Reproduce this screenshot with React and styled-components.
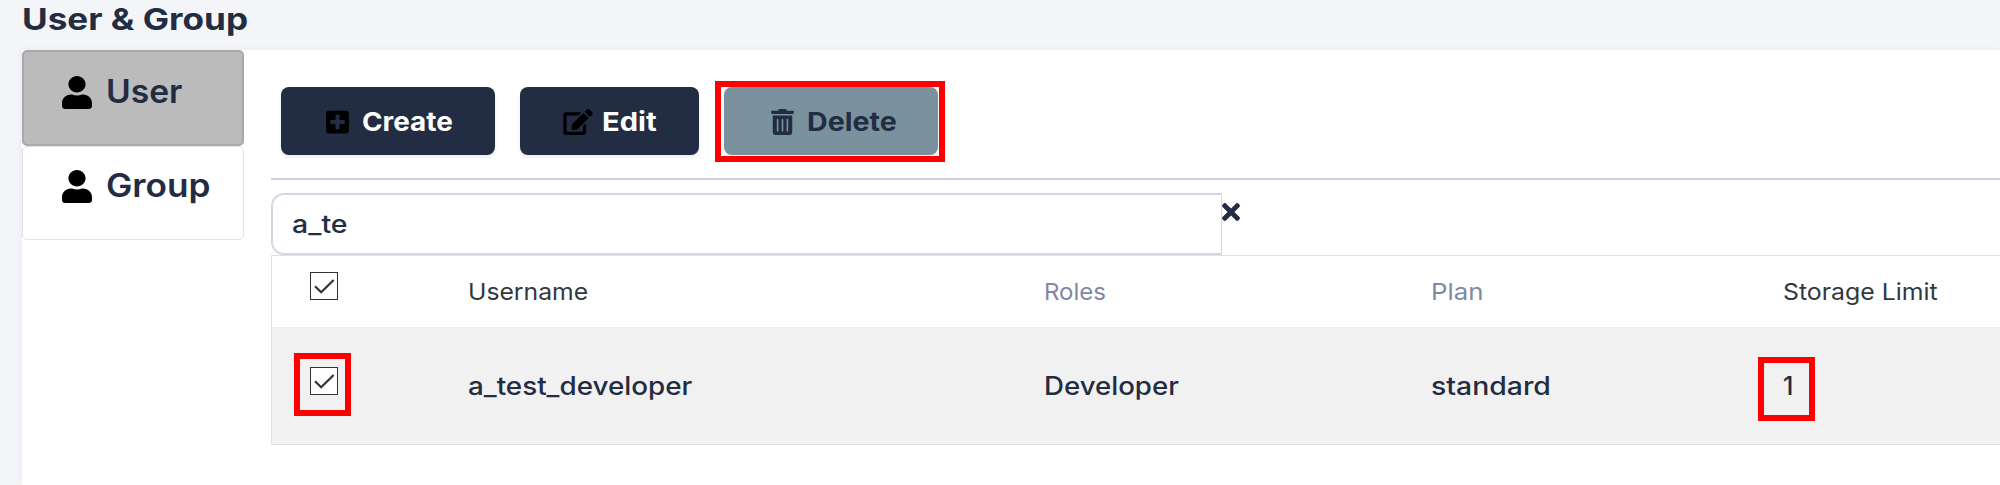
import React from 'react';
import styled, { createGlobalStyle, css } from 'styled-components';
import { FaUser, FaPlusSquare, FaEdit, FaTrashAlt, FaTimes } from 'react-icons/fa';

const GlobalStyle = createGlobalStyle`
  *, *::before, *::after { box-sizing: border-box; }
  body {
    margin: 0;
    overflow: hidden;
    background: #f4f5f9;
    color: #222c42;
    font-family: Inter, "Open Sans", sans-serif;
  }
`;

const Page = styled.div`
  display: flex;
  flex-direction: column;
  height: 485px;
  overflow: hidden;
`;

const Label = styled.span`
  display: inline-block;
  white-space: nowrap;
  transform: scaleX(${(p) => p.$stretch || 1});
  transform-origin: left center;
`;

const PageTitle = styled.h1`
  flex: none;
  height: 50px;
  margin: 0;
  padding-left: 22px;
  font-size: 30px;
  font-weight: 700;
  line-height: 38px;
`;

const Card = styled.main`
  flex: 1;
  display: flex;
  margin-left: 22px;
  background: #fff;
  box-shadow: 0 0 6px rgba(34, 44, 66, 0.06);
`;

const Nav = styled.nav`
  flex: none;
  width: 222px;
`;

const NavItem = styled.a`
  display: flex;
  align-items: center;
  gap: 14px;
  height: 94px;
  padding: 0 0 14px 39px;
  border: 1px solid #e2e3e5;
  border-radius: 5px;
  font-size: 32px;
  font-weight: 600;
  line-height: 40px;

  svg {
    flex: none;
    width: 30px;
    height: 33px;
    color: #000;
  }

  ${(p) => p.$active && css`
    height: 96px;
    padding-bottom: 12px;
    border: 2px solid #a9a9a9;
    padding-left: 38px;
    background: #bbb;
  `}
`;

const Content = styled.section`
  flex: 1;
  min-width: 0;
  padding: 37px 0 0 27px;
`;

const Toolbar = styled.div`
  display: flex;
  gap: 25px;
  height: 93px;
  padding-left: 10px;
  border-bottom: 2px solid #cbd0df;
`;

const ToolButton = styled.button`
  display: flex;
  align-items: center;
  justify-content: flex-start;
  gap: ${(p) => p.$gap}px;
  width: ${(p) => p.$width}px;
  height: 68px;
  padding: 1px 0 0 ${(p) => p.$inset}px;
  border: 0;
  border-radius: 8px;
  background: ${(p) => (p.$muted ? '#7a929e' : '#222c42')};
  color: ${(p) => (p.$muted ? '#222c42' : '#fff')};
  box-shadow: 0 3px 4px rgba(0, 0, 0, 0.07);
  font: ${(p) => (p.$muted ? 650 : 700)} 26px/32px Inter, "Open Sans", sans-serif;

  svg {
    flex: none;
    width: ${(p) => p.$icon}px;
    height: 26px;
    color: ${(p) => (p.$muted ? '#222c42' : '#000')};
  }
`;

const Marked = styled.div`
  position: relative;
  width: max-content;
  height: max-content;
`;

const RedFrame = styled.span`
  position: absolute;
  top: ${(p) => p.$top}px;
  left: ${(p) => p.$left}px;
  width: ${(p) => p.$width}px;
  height: ${(p) => p.$height}px;
  border: 6px solid #f00;
  pointer-events: none;
`;

const SearchRow = styled.div`
  display: flex;
  align-items: flex-start;
  height: 75px;
  padding-top: 13px;
`;

const SearchBox = styled.div`
  display: flex;
  align-items: center;
  width: 951px;
  height: 62px;
  padding: 0 0 0 19px;
  border: 2px solid #d3d6e3;
  border-right-width: 1px;
  border-radius: 13px 0 0 13px;
  font-size: 25px;
  font-weight: 500;
`;

const ClearIcon = styled(FaTimes)`
  width: 18px;
  height: 26px;
  margin-top: 6px;
  color: #222c42;
`;

const Table = styled.div`
  height: 190px;
  border: 1px solid #dee1e8;
  border-width: 1px 0 1px 1px;
`;

const Row = styled.div`
  display: grid;
  grid-template-columns: 196px 576px 387px 352px 1fr;
  align-items: center;
  height: ${(p) => (p.$head ? 71 : 117)}px;
  background: ${(p) => (p.$head ? '#fff' : '#f1f1f1')};
  font-size: ${(p) => (p.$head ? 23 : 25)}px;
  font-weight: ${(p) => (p.$head ? 400 : 500)};
`;

const Cell = styled.div`
  color: ${(p) => p.$color || 'inherit'};
`;

const CheckCell = styled.div`
  padding: 0 0 ${(p) => (p.$head ? 11 : 9)}px 38px;
`;

const CheckSquare = styled.span`
  display: block;
  width: 28px;
  height: 28px;
  border: 1.5px solid #333;
  background: #fff;

  svg { display: block; width: 100%; height: 100%; }
`;

const Checkbox = () => (
  <CheckSquare role="checkbox" aria-checked="true">
    <svg viewBox="0 0 26 26" fill="none" stroke="#333" strokeWidth="2.2">
      <path d="M4 13.2 L10.2 19.2 L22.6 7" />
    </svg>
  </CheckSquare>
);

export default function App() {
  return (
    <Page>
      <GlobalStyle />
      <PageTitle><Label $stretch={1.17}>User &amp; Group</Label></PageTitle>
      <Card>
        <Nav>
          <NavItem $active>
            <FaUser preserveAspectRatio="none" />
            <Label $stretch={1.05}>User</Label>
          </NavItem>
          <NavItem>
            <FaUser preserveAspectRatio="none" />
            <Label $stretch={1.1}>Group</Label>
          </NavItem>
        </Nav>
        <Content>
          <Toolbar>
            <ToolButton $width={214} $inset={45} $icon={23} $gap={13}>
              <FaPlusSquare /><Label $stretch={1.07}>Create</Label>
            </ToolButton>
            <ToolButton $width={179} $inset={43} $icon={30} $gap={9}>
              <FaEdit /><Label $stretch={1.12}>Edit</Label>
            </ToolButton>
            <Marked>
              <ToolButton $muted $width={214} $inset={47} $icon={23} $gap={13}>
                <FaTrashAlt /><Label $stretch={1.1}>Delete</Label>
              </ToolButton>
              <RedFrame $top={-6} $left={-9} $width={230} $height={81} />
            </Marked>
          </Toolbar>
          <SearchRow>
            <SearchBox><Label $stretch={1.14}>a_te</Label></SearchBox>
            <ClearIcon />
          </SearchRow>
          <Table>
            <Row $head>
              <CheckCell $head><Checkbox /></CheckCell>
              <Cell $color="#33373f"><Label $stretch={1.075}>Username</Label></Cell>
              <Cell $color="#8088a3"><Label $stretch={1.045}>Roles</Label></Cell>
              <Cell $color="#8088a3"><Label $stretch={1.12}>Plan</Label></Cell>
              <Cell $color="#33373f"><Label $stretch={1.08}>Storage Limit</Label></Cell>
            </Row>
            <Row>
              <CheckCell>
                <Marked>
                  <Checkbox />
                  <RedFrame $top={-14} $left={-16} $width={57} $height={63} />
                </Marked>
              </CheckCell>
              <Cell><Label $stretch={1.112}>a_test_developer</Label></Cell>
              <Cell><Label $stretch={1.105}>Developer</Label></Cell>
              <Cell><Label $stretch={1.135}>standard</Label></Cell>
              <Cell>
                <Marked>
                  <Label>1</Label>
                  <RedFrame $top={-14} $left={-25} $width={57} $height={64} />
                </Marked>
              </Cell>
            </Row>
          </Table>
        </Content>
      </Card>
    </Page>
  );
}
